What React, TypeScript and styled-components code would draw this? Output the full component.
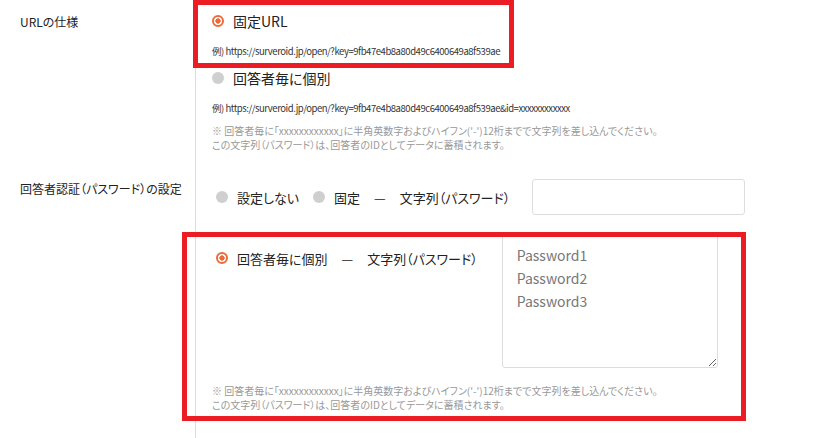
import React from 'react';
import styled, { createGlobalStyle, css } from 'styled-components';

const GlobalStyle = createGlobalStyle`
*, *::before, *::after {
    box-sizing: border-box;
}
body {
    margin: 0;
    background: #fff;
    color: #222;
    font-family: "Noto Sans CJK JP", "Noto Sans", sans-serif;
    font-feature-settings: "palt";
}
`;

const FormTable = styled.div`
width: 827px;
min-height: 100vh;
display: grid;
grid-template-columns: 196px 1fr;
grid-template-rows: 167px 1fr;
`;

const LabelCell = styled.div`
border-right: 1px solid #ddd;
padding: 14px 0 0 20px;
font-size: 12px;
line-height: 16px;
color: #222;
`;

const UrlCell = styled.div`
display: flex;
flex-direction: column;
align-items: flex-start;
padding-left: 16px;
`;

const AuthCell = styled.div`
display: flex;
flex-direction: column;
align-items: flex-start;
padding-left: 20px;
`;

// red frame drawn round the parts that are pointed out
const highlight = css`
outline: 5px solid #ec1c24;
`;

const FixedOption = styled.div<{ $highlight?: boolean }>`
margin: 5px 0 0 -14px;
padding: 6px 12px 5px 14px;
width: 311px;
${p => p.$highlight && highlight}
`;

const EachOption = styled.div`
padding-top: 5px;
`;

const RadioLine = styled.div<{ $size?: number }>`
display: flex;
align-items: center;
gap: 9px;
height: 20px;
font-size: ${p => p.$size || 14}px;
white-space: nowrap;
`;

const Radio = styled.span<{ $checked?: boolean }>`
flex: none;
width: 12px;
height: 12px;
border-radius: 50%;
${p => p.$checked
    ? css`
        border: 2px solid #ee6a3a;
        background: radial-gradient(circle, #ee6a3a 0 2.4px, #fff 2.9px);
    `
    : css`
        background: #cfcfcf;
    `}
`;

const Example = styled.div`
margin-top: 13px;
font-size: 9.5px;
letter-spacing: -0.45px;
line-height: 14px;
color: #333;
white-space: nowrap;
`;

const Note = styled.div<{ $top?: number }>`
margin-top: ${p => p.$top || 9}px;
font-size: 10px;
line-height: 14px;
color: #999;
white-space: nowrap;
`;

const ChoiceRow = styled.div`
margin-top: 12px;
display: flex;
align-items: center;
height: 36px;
font-size: 13px;
white-space: nowrap;
`;

const Choice = styled.label`
display: flex;
align-items: center;
gap: 9px;
& + & {
    margin-left: 14px;
}
`;

const Dash = styled.span`
margin: 0 14px;
`;

const TextInput = styled.input`
margin-left: 22px;
width: 213px;
height: 36px;
border: 1px solid #ddd;
border-radius: 3px;
background: #fff;
`;

const IndividualBlock = styled.div<{ $highlight?: boolean }>`
margin: 22px 0 0 -29px;
padding: 0 0 4px 25px;
width: 554px;
${p => p.$highlight && highlight}
`;

const IndividualRow = styled.div`
display: flex;
align-items: flex-start;
`;

const IndividualLabel = styled(RadioLine)`
margin-top: 11px;
padding-left: 4px;
font-size: 13px;
`;

const PasswordArea = styled.textarea`
margin: -3px 0 0 24px;
width: 216px;
height: 134px;
padding: 9px 14px 5px;
border: 1px solid #ddd;
border-radius: 3px;
font-family: "Noto Sans CJK JP", "Noto Sans", sans-serif;
font-size: 14px;
line-height: 23px;
color: #777;
resize: both;
`;

const exampleUrl = 'https://surveroid.jp/open/?key=9fb47e4b8a80d49c6400649a8f539ae';

function Notes({ top }: { top?: number }) {
    return (
        <Note $top={top}>
            ※ 回答者毎に「xxxxxxxxxxxx」に半角英数字およびハイフン('-')12桁までで文字列を差し込んでください。<br />
            この文字列（パスワード）は、回答者のIDとしてデータに蓄積されます。
        </Note>
    );
}

export default function App() {
    return (
        <>
            <GlobalStyle />
            <FormTable>
                <LabelCell>URLの仕様</LabelCell>
                <UrlCell>
                    <FixedOption $highlight>
                        <RadioLine>
                            <Radio $checked />
                            固定URL
                        </RadioLine>
                        <Example>例) {exampleUrl}</Example>
                    </FixedOption>
                    <EachOption>
                        <RadioLine>
                            <Radio />
                            回答者毎に個別
                        </RadioLine>
                        <Example>例) {exampleUrl}&amp;id=xxxxxxxxxxxx</Example>
                        <Notes />
                    </EachOption>
                </UrlCell>

                <LabelCell>回答者認証（パスワード）の設定</LabelCell>
                <AuthCell>
                    <ChoiceRow>
                        <Choice>
                            <Radio />
                            設定しない
                        </Choice>
                        <Choice>
                            <Radio />
                            固定
                        </Choice>
                        <Dash>—</Dash>
                        文字列（パスワード）
                        <TextInput type="text" />
                    </ChoiceRow>
                    <IndividualBlock $highlight>
                        <IndividualRow>
                            <IndividualLabel>
                                <Radio $checked />
                                <span>
                                    回答者毎に個別
                                    <Dash>—</Dash>
                                    文字列（パスワード）
                                </span>
                            </IndividualLabel>
                            <PasswordArea readOnly defaultValue={'Password1\nPassword2\nPassword3'} />
                        </IndividualRow>
                        <Notes top={16} />
                    </IndividualBlock>
                </AuthCell>
            </FormTable>
        </>
    );
}
